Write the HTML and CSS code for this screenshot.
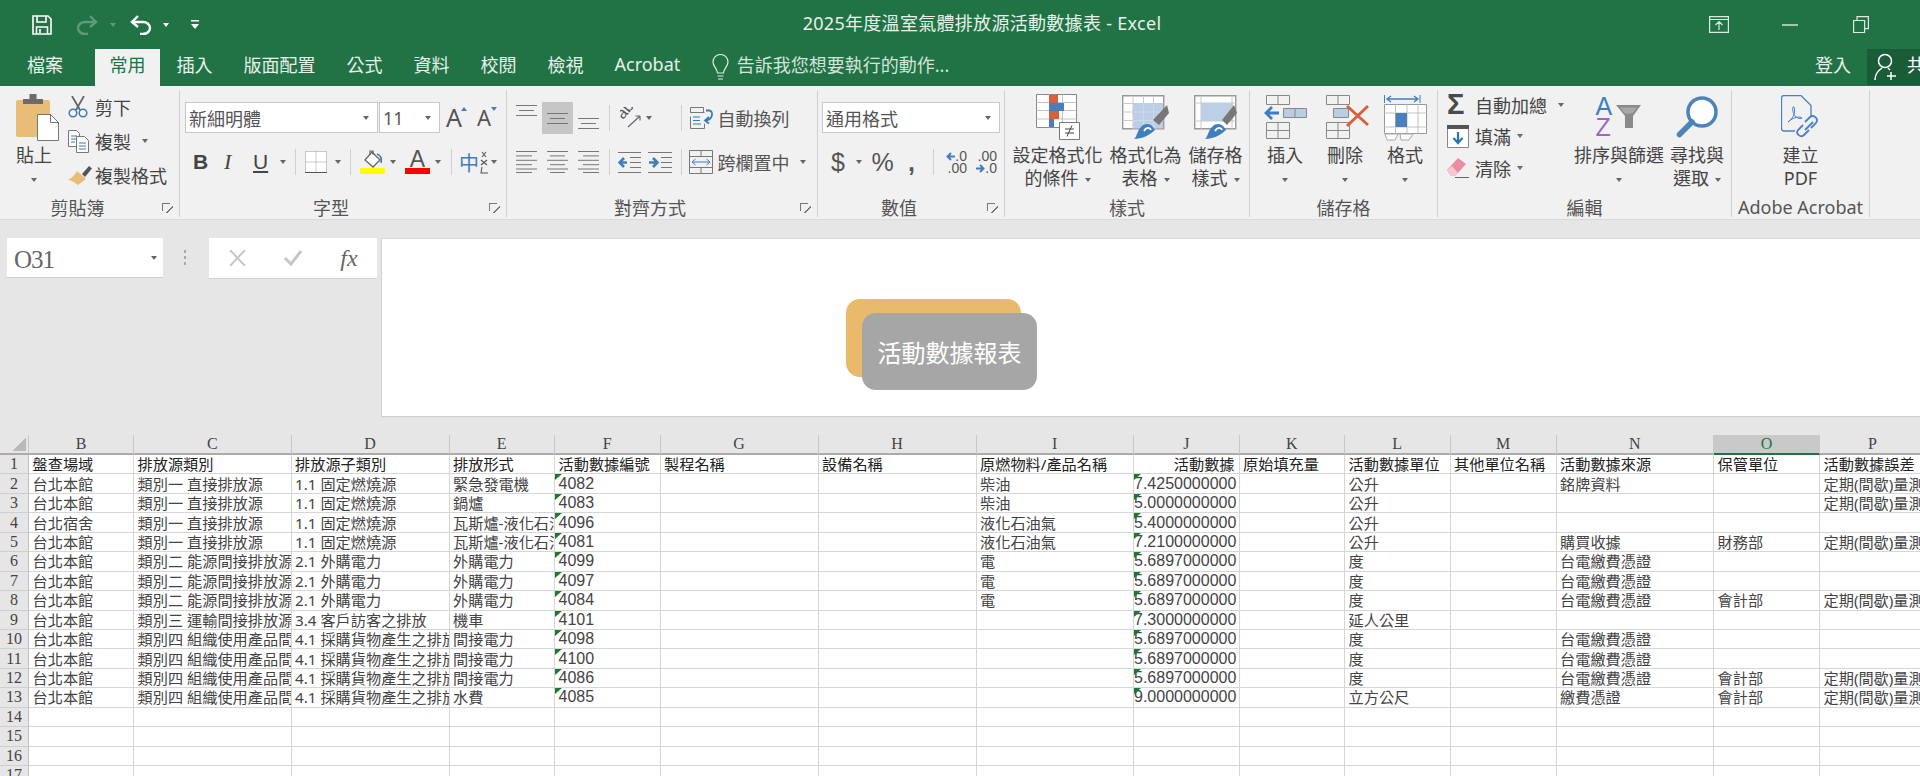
FILE: index.html
```html
<!DOCTYPE html>
<html lang="zh-Hant">
<head>
    <meta charset="UTF-8">
    <meta name="viewport" content="width=device-width, initial-scale=1.0">
    <title>2025年度溫室氣體排放源活動數據表 - Excel</title>
    <link rel="stylesheet" href="styles.css">
</head>
<body>

<div class="titlebar">
    <div class="qat">
        <svg width="20" height="20" viewBox="0 0 20 20" fill="none" stroke="#fff" stroke-width="1.6"><path d="M1 1h15l3 3v15H1z"/><path d="M5 1v6h9V1M4.500 19v-7h11v7M8 14v4"/></svg>
        <svg width="22" height="21" viewBox="0 0 22 21" fill="none" stroke="#5d9b79" stroke-width="2.400"><path d="M14 2l6 6-6 5"/><path d="M20 8H9a7 6 0 0 0 0 12h3"/></svg>
        <span class="caret caret-dim"></span>
        <svg width="22" height="21" viewBox="0 0 22 21" fill="none" stroke="#fff" stroke-width="2.400"><path d="M8 2L2 8l6 5"/><path d="M2 8h11a7 6 0 0 1 0 12h-3"/></svg>
        <span class="caret caret-white"></span>
        <svg width="8" height="10" viewBox="0 0 8 10" fill="#fff"><path d="M0 0h8v1.500H0zM0 4h8L4 9z"/></svg>
    </div>
    <div class="doc-title">2025年度溫室氣體排放源活動數據表 - Excel</div>
    <div class="winbtns">
        <svg width="20" height="17" viewBox="0 0 20 17" fill="none" stroke="#dfe9e3" stroke-width="1.200"><path d="M.6.600h18.800v15.800H.6zM.6 3.500h18.800M10 14V6M6.500 9L10 5.500 13.500 9"/></svg>
        <svg width="16" height="17" viewBox="0 0 16 17" fill="none" stroke="#dfe9e3" stroke-width="1.400"><path d="M0 9h16"/></svg>
        <svg width="16" height="17" viewBox="0 0 16 17" fill="none" stroke="#dfe9e3" stroke-width="1.200"><path d="M.6 4.500h11v12H.6zM4 4.500V.6h11.400v12h-3.800"/></svg>
    </div>
</div>

<div class="tabs">
    <div class="tab tab-file">檔案</div>
    <div class="tab tab-active">常用</div>
    <div class="tab">插入</div>
    <div class="tab">版面配置</div>
    <div class="tab">公式</div>
    <div class="tab">資料</div>
    <div class="tab">校閱</div>
    <div class="tab">檢視</div>
    <div class="tab">Acrobat</div>
    <div class="tellme">
        <svg width="17" height="27" viewBox="0 0 17 27" fill="none" stroke="#dfe9e3" stroke-width="1.200"><path d="M5.500 19C5 14 1 12.500 1 8a7.500 7.500 0 0 1 15 0c0 4.500-4 6-4.500 11zM5.500 22h6M6 25h5"/></svg>
        <span>告訴我您想要執行的動作...</span>
    </div>
    <div class="signin">登入</div>
    <div class="share">
        <svg width="23" height="28" viewBox="0 0 23 28" fill="none" stroke="#fff" stroke-width="1.500"><circle cx="11" cy="8" r="6.500"/><path d="M1 27c0-7 4-10 7-12M14 15l2 2M17 19v8M13 23h9"/></svg>
        <span>共用</span>
    </div>
</div>

<div class="ribbon">
    <section class="group g-clip">
        <div class="group-body">
            <div class="paste">
                <div class="ico">
                    <svg width="43" height="47" viewBox="0 0 43 47"><rect y="6" width="34" height="37" rx="2" fill="#e8bd75"/><path d="M7 5h6.500V0h7v5H27v5H7z" fill="#6b6b6b"/><path d="M21.500 20.500h13l8 8v18h-21z" fill="#fff" stroke="#777"/><path d="M34.500 20.500v8h8" fill="none" stroke="#777"/></svg>
                </div>
                <div class="big-text">貼上</div>
                <div class="big-text paste-caret"><span class="caret"></span></div>
            </div>
            <div class="mini-col">
                <div class="mini">
                    <span class="mico"><svg width="20" height="22" viewBox="0 0 20 22" fill="none"><path d="M4 0l8 14M16 0L8 14" stroke="#666" stroke-width="1.800"/><circle cx="5" cy="17" r="3.800" stroke="#3d7ab5" stroke-width="1.500"/><circle cx="15" cy="17" r="3.800" stroke="#3d7ab5" stroke-width="1.500"/></svg></span>
                    <span>剪下</span>
                </div>
                <div class="mini">
                    <span class="mico"><svg width="21" height="23" viewBox="0 0 21 23" fill="#fff" stroke="#777"><path d="M.5.500h8l3 3v13h-11z"/><path d="M3 6h6M3 9h6M3 12h4" stroke="#3d7ab5"/><path d="M8.500 6.500h8l4 4v12h-12z"/><path d="M11 13h7M11 16h7M11 19h7" stroke="#3d7ab5"/></svg></span>
                    <span>複製</span><span class="caret caret-far"></span>
                </div>
                <div class="mini">
                    <span class="mico"><svg width="24" height="20" viewBox="0 0 24 20"><path d="M14 9l7-8 3 2.500-7 8.500z" fill="#555"/><path d="M9 6l9 8-8 6C6 17 3 15 0 15c4-2 7-5 9-9z" fill="#e8bd75"/></svg></span>
                    <span>複製格式</span>
                </div>
            </div>
        </div>
        <div class="group-label"><span>剪貼簿</span><i class="launcher"></i></div>
    </section>

    <section class="group g-font">
        <div class="group-body rows">
            <div class="row row-font1">
                <div class="combo combo-font"><span>新細明體</span><span class="caret"></span></div>
                <div class="combo combo-size"><span>11</span><span class="caret"></span></div>
                <div class="grow-a grow-up">A<i></i></div>
                <div class="grow-a grow-down">A<i></i></div>
            </div>
            <div class="row row-font2">
                <b class="fmt">B</b>
                <i class="fmt fmt-i">I</i>
                <u class="fmt">U</u>
                <span class="caret"></span>
                <span class="sep"></span>
                <svg width="22" height="22" viewBox="0 0 22 22" fill="#fff" stroke="#999" stroke-dasharray="1 1"><path d="M.5.500h21v21H.5zM11 .5v21M.5 11h21"/><path d="M0 21.500h22" stroke="#555" stroke-dasharray="none"/></svg>
                <span class="caret"></span>
                <span class="sep"></span>
                <div class="colorbtn">
                    <svg width="25" height="18" viewBox="0 0 25 18" fill="none"><path d="M5 10l7-8 8 8-7 7z" fill="#fff" stroke="#666" stroke-width="1.300"/><path d="M10 5V1h3v4" stroke="#666" stroke-width="1.200"/><path d="M17 4c3 1 5 4 4 9" stroke="#3d7ab5" stroke-width="1.600"/></svg>
                    <i class="bar bar-yellow"></i>
                </div>
                <span class="caret"></span>
                <div class="colorbtn"><span class="color-a">A</span><i class="bar bar-red"></i></div>
                <span class="caret"></span>
                <span class="sep"></span>
                <div class="phonetic"><span>中</span><svg width="11" height="23" viewBox="0 0 11 23" fill="none" stroke="#555" stroke-width="1.100"><path d="M3 1l4 5M7 1L3 6M2 9l6 5M8 9l-6 5M3 16l-1 6h7"/></svg></div>
                <span class="caret"></span>
            </div>
        </div>
        <div class="group-label"><span>字型</span><i class="launcher"></i></div>
    </section>

    <section class="group g-align">
        <div class="group-body rows">
            <div class="row row-align1">
                <svg class="va-top" width="21" height="11" viewBox="0 0 21 11" stroke="#777"><path d="M0 .5h21M3 5.500h15M0 10.500h21"/></svg>
                <div class="align-on"><svg width="21" height="11" viewBox="0 0 21 11" stroke="#777"><path d="M0 .5h21M3 5.500h15M0 10.500h21"/></svg></div>
                <svg class="va-low" width="21" height="11" viewBox="0 0 21 11" stroke="#777"><path d="M0 .5h21M3 5.500h15M0 10.500h21"/></svg>
                <span class="sep"></span>
                <svg width="22" height="22" viewBox="0 0 22 22"><text class="orient" transform="translate(3 13) rotate(-50)">ab</text><path d="M8 20L20 9M20 9h-4.500M20 9v4.500" stroke="#666" stroke-width="1.200" fill="none"/></svg>
                <span class="caret"></span>
                <span class="sep"></span>
                <svg width="24" height="22" viewBox="0 0 24 22" fill="none" stroke="#777"><path d="M.5.500h13v5H.5zM.5 5.500h14M.5 9.500v12h14V17"/><path d="M3 10h7M3 13.500h7M3 17h8" stroke="#3d7ab5"/><path d="M16 3.500h3c5 0 4 10-4 10M19 10l-4 3.500 4 3" stroke="#3d7ab5" stroke-width="1.800"/></svg>
                <span class="tool-text">自動換列</span>
            </div>
            <div class="row row-align2">
                <svg width="21" height="22" viewBox="0 0 21 22" stroke="#777"><path d="M0 .5h21M0 4.900h16M0 9.300h21M0 13.700h16M0 18h21M0 21.500h16"/></svg>
                <svg width="21" height="22" viewBox="0 0 21 22" stroke="#777"><path d="M0 .5h21M3 4.900h15M0 9.300h21M3 13.700h15M0 18h21M3 21.500h15"/></svg>
                <svg width="21" height="22" viewBox="0 0 21 22" stroke="#777"><path d="M0 .5h21M5 4.900h16M0 9.300h21M5 13.700h16M0 18h21M5 21.500h16"/></svg>
                <span class="sep"></span>
                <svg width="23" height="22" viewBox="0 0 23 22" fill="none" stroke="#777"><path d="M0 1.500h23M12 6.500h11M12 11.500h11M12 16.500h11M0 21.500h23"/><path d="M9 11.500H2M6 7l-4.500 4.500L6 16" stroke="#3f7fc0" stroke-width="2.600"/></svg>
                <svg width="24" height="22" viewBox="0 0 24 22" fill="none" stroke="#777"><path d="M0 1.500h24M13 6.500h11M13 11.500h11M13 16.500h11M0 21.500h24"/><path d="M1 11.500h7M5 7l4.500 4.500L5 16" stroke="#3f7fc0" stroke-width="2.600"/></svg>
                <span class="sep"></span>
                <svg width="24" height="24" viewBox="0 0 24 24" fill="none" stroke="#777"><path d="M.5.500h23v23H.5zM.5 6.500h23M.5 17.500h23M12 .5v6M12 17.500v6"/><path d="M3 12h18M6.500 9L3 12l3.500 3M17.500 9l3.500 3-3.500 3" stroke="#3f7fc0"/></svg>
                <span class="tool-text">跨欄置中</span>
                <span class="caret"></span>
            </div>
        </div>
        <div class="group-label"><span>對齊方式</span><i class="launcher"></i></div>
    </section>

    <section class="group g-number">
        <div class="group-body rows">
            <div class="row row-num1">
                <div class="combo combo-num"><span>通用格式</span><span class="caret"></span></div>
            </div>
            <div class="row row-num2">
                <span class="sym">$</span>
                <span class="caret"></span>
                <span class="sym">%</span>
                <span class="sym sym-comma">,</span>
                <span class="sep"></span>
                <div class="dec"><div class="dec-line"><svg width="9" height="9" viewBox="0 0 9 9" fill="none" stroke="#3f7fc0" stroke-width="2"><path d="M9 4.500H1.500M5 1L1.500 4.500 5 8"/></svg>.0</div><div class="dec-line">.00</div></div>
                <div class="dec"><div class="dec-line">.00</div><div class="dec-line"><svg width="9" height="9" viewBox="0 0 9 9" fill="none" stroke="#3f7fc0" stroke-width="2"><path d="M0 4.500h7.500M4 1l3.500 3.500L4 8"/></svg>.0</div></div>
            </div>
        </div>
        <div class="group-label"><span>數值</span><i class="launcher"></i></div>
    </section>

    <section class="group g-style">
        <div class="group-body bigs">
            <div class="big big-cond">
                <div class="ico">
                    <svg width="46" height="46" viewBox="0 0 46 46" fill="none"><path d="M1.500.5h40v33h-40z" fill="#fff" stroke="#888"/><path d="M1.500 8.500h40M1.500 16.500h40M1.500 25h40M14.500.5v33M27.500.5v33" stroke="#c2c2c2"/><path d="M14 1h9v8h-9zM14 17h10v8H14z" fill="#d7603a"/><path d="M14 9h15v8H14zM14 25h5v8h-5z" fill="#4a7fbd"/><path d="M24.500 28.500h20v17h-20z" fill="#fff" stroke="#777"/><path d="M30 35h9M30 39h9M32 42.500l5-11" stroke="#444"/></svg>
                </div>
                <div class="big-text">設定格式化</div>
                <div class="big-text">的條件<span class="caret"></span></div>
            </div>
            <div class="big big-table">
                <div class="ico">
                    <svg width="47" height="44" viewBox="0 0 47 44" fill="none"><path d="M.7.700h41v33H.7z" fill="#fff" stroke="#999" stroke-width="1.400"/><path d="M.7 8.500h41M.7 17h41M.7 25.500h41M11 .7v33M21.500.7v33M31.500.7v33" stroke="#c8c8c8"/><path d="M11 8.500h30v25H11z" fill="#bccfe4"/><path d="M11 17h30M11 25.500h30M21.500 8.500v25M31.500 8.500v25" stroke="#cddaea"/><path d="M31 25l14-15 2 8-10 12z" fill="#777"/><path d="M12 44c3-2 3-9 8-13 4-3 9-3 13 4 -5 5-13 9-21 9z" fill="#3f7fc0"/><path d="M22 36c2-4 6-4 7-1" stroke="#fff" stroke-width="1.800"/></svg>
                </div>
                <div class="big-text">格式化為</div>
                <div class="big-text">表格<span class="caret"></span></div>
            </div>
            <div class="big big-cell">
                <div class="ico">
                    <svg width="44" height="44" viewBox="0 0 44 44" fill="none"><path d="M.7.700h41v33H.7z" fill="#fff" stroke="#999" stroke-width="1.400"/><path d="M.7 8h41M.7 26h41M7 .7v33M38 .7v33" stroke="#c8c8c8"/><path d="M7 8h32v18H7z" fill="#bccfe4"/><path d="M28 25l12-15 3 8-10 12z" fill="#777"/><path d="M11 44c3-2 3-9 8-13 4-3 9-3 13 4 -5 5-13 9-21 9z" fill="#3f7fc0"/><path d="M21 36c2-4 6-4 7-1" stroke="#fff" stroke-width="1.800"/></svg>
                </div>
                <div class="big-text">儲存格</div>
                <div class="big-text">樣式<span class="caret"></span></div>
            </div>
        </div>
        <div class="group-label"><span>樣式</span></div>
    </section>

    <section class="group g-cells">
        <div class="group-body bigs">
            <div class="big big-cellbtn">
                <div class="ico">
                    <svg width="44" height="44" viewBox="0 0 44 44" fill="none" stroke="#888"><path d="M3.500.5h23v9h-23zM15 .5v9M3.500 27.500h23v16h-23zM3.500 35.500h23M15 27.500v16"/><path d="M20.500 13.500h23v9h-23z" fill="#b9cde3"/><path d="M32 13.500v9"/><path d="M16 18H3M9 12l-6 6 6 6" stroke="#3f7fc0" stroke-width="2.800"/></svg>
                </div>
                <div class="big-text">插入</div>
                <div class="big-text"><span class="caret caret-solo"></span></div>
            </div>
            <div class="big big-cellbtn">
                <div class="ico">
                    <svg width="48" height="44" viewBox="0 0 48 44" fill="none" stroke="#888"><path d="M5.500.5h23v9h-23zM17 .5v9M5.500 27.500h23v16h-23zM5.500 35.500h23M17 27.500v16"/><path d="M12.500 13.500h15v9h-15z" fill="#b9cde3"/><path d="M26 11l21 19M47 11L26 31" stroke="#d7603a" stroke-width="3"/></svg>
                </div>
                <div class="big-text">刪除</div>
                <div class="big-text"><span class="caret caret-solo"></span></div>
            </div>
            <div class="big big-cellbtn">
                <div class="ico">
                    <svg width="43" height="47" viewBox="0 0 43 47" fill="none"><path d="M.5 1v8M36 1v8" stroke="#3f7fc0"/><path d="M3 5h31M7 2L3 5l4 3M30 2l4 3-4 3" stroke="#3f7fc0" stroke-width="1.300"/><path d="M.5 10.500h42v29H.5z" fill="#fff" stroke="#999"/><path d="M.5 19h42M.5 33h42M11.500 10.500v29M23 10.500v29M34 10.500v29" stroke="#c2c2c2"/><path d="M11.500 19H23v14H11.500z" fill="#4a7fbd"/><path d="M1 40h13l-3 6H3zM16 40h13l-4 6h-8z" fill="#fff" stroke="#aaa"/></svg>
                </div>
                <div class="big-text">格式</div>
                <div class="big-text"><span class="caret caret-solo"></span></div>
            </div>
        </div>
        <div class="group-label"><span>儲存格</span></div>
    </section>

    <section class="group g-edit">
        <div class="group-body bigs">
            <div class="mini-col mini-col-edit">
                <div class="mini">
                    <span class="mico sigma">Σ</span>
                    <span>自動加總</span><span class="caret caret-far"></span>
                </div>
                <div class="mini">
                    <span class="mico"><svg width="22" height="23" viewBox="0 0 22 23" fill="#fff" stroke="#888"><path d="M.5.500h21v22H.5z"/><path d="M0 0h22v4H0z" fill="#555" stroke="none"/><path d="M11 7v11M6.500 13l4.500 5 4.500-5" fill="none" stroke="#2f72b8" stroke-width="2.200"/></svg></span>
                    <span>填滿</span><span class="caret"></span>
                </div>
                <div class="mini">
                    <span class="mico"><svg width="22" height="20" viewBox="0 0 22 20"><path d="M0 12L11 0l8 6-11 12H4z" fill="#ea8da0"/><path d="M0 12l4 6h4l3-3-6-7z" fill="#f6c7d0"/><path d="M8 19.500h14" stroke="#666"/></svg></span>
                    <span>清除</span><span class="caret"></span>
                </div>
            </div>
            <div class="big big-sort">
                <div class="ico">
                    <div class="sort-ico">
                        <div class="az"><span class="az-a">A</span><span class="az-z">Z</span></div>
                        <svg width="25" height="23" viewBox="0 0 25 23"><path d="M0 0h25l-8 11v12H9V11z" fill="#8a8a8a"/><path d="M4 2.500h17l-5 6H9z" fill="#a8a8a8"/></svg>
                    </div>
                </div>
                <div class="big-text">排序與篩選</div>
                <div class="big-text"><span class="caret caret-solo"></span></div>
            </div>
            <div class="big big-find">
                <div class="ico">
                    <svg width="42" height="42" viewBox="0 0 42 42" fill="none"><circle cx="26" cy="16" r="14" fill="#fff" stroke="#4a84b8" stroke-width="3.500"/><path d="M16 26L3.500 38.500" stroke="#4a84b8" stroke-width="5.500" stroke-linecap="round"/></svg>
                </div>
                <div class="big-text">尋找與</div>
                <div class="big-text">選取<span class="caret"></span></div>
            </div>
        </div>
        <div class="group-label"><span>編輯</span></div>
    </section>

    <section class="group g-pdf">
        <div class="group-body bigs">
            <div class="big big-pdf">
                <div class="ico">
                    <svg width="40" height="44" viewBox="0 0 40 44" fill="none" stroke="#4a7fcc" stroke-width="1.300"><path d="M14 36H3a2.500 2.500 0 0 1-2.500-2.500V3A2.500 2.500 0 0 1 3 .5h17l10 10V22"/><path d="M7 27c5-3 8-10 6-15-2-2-2 7 2 10 3 2 6 2 6 1-1-2-9-1-14 4z" stroke-width="1"/><path d="M24 27l5-5c4-3 9 2 6 6l-5 5M28 35l-5 5c-3 3-9-1-6-5l5-5M24 35l8-8" stroke-width="1.800"/></svg>
                </div>
                <div class="big-text">建立</div>
                <div class="big-text">PDF</div>
            </div>
        </div>
        <div class="group-label"><span>Adobe Acrobat</span></div>
    </section>
</div>

<div class="formula">
    <div class="namebox"><span class="name-text">O31</span><span class="caret"></span></div>
    <div class="dots"></div>
    <div class="fxbox">
        <svg width="19" height="16" viewBox="0 0 19 16" fill="none" stroke="#c6c6c6" stroke-width="2"><path d="M2 0l15 16M17 0L2 16"/></svg>
        <svg width="20" height="16" viewBox="0 0 20 16" fill="none" stroke="#c6c6c6" stroke-width="3"><path d="M2 8l6 6L18 1"/></svg>
        <span class="fx-f">fx</span>
    </div>
    <div class="fxinput">
        <div class="shape shape-back"></div>
        <div class="shape shape-front">活動數據報表</div>
    </div>
</div>

<table class="sheet">
    <colgroup>
        <col class="w-rn"><col class="w-b"><col class="w-m"><col class="w-l"><col class="w-s"><col class="w-s"><col class="w-l"><col class="w-l"><col class="w-m"><col class="w-s"><col class="w-s"><col class="w-s"><col class="w-x"><col class="w-m"><col class="w-x"><col class="w-x">
    </colgroup>
    <tr class="cols"><th class="corner"><i></i></th><th>B</th><th>C</th><th>D</th><th>E</th><th>F</th><th>G</th><th>H</th><th>I</th><th>J</th><th>K</th><th>L</th><th>M</th><th>N</th><th class="col-on">O</th><th>P</th></tr>
    <tr class="head"><th>1</th><td>盤查場域</td><td>排放源類別</td><td>排放源子類別</td><td>排放形式</td><td>活動數據編號</td><td>製程名稱</td><td>設備名稱</td><td>原燃物料/產品名稱</td><td class="num-head">活動數據</td><td>原始填充量</td><td>活動數據單位</td><td>其他單位名稱</td><td>活動數據來源</td><td>保管單位</td><td>活動數據誤差</td></tr>
    <tr><th>2</th><td>台北本館</td><td>類別一 直接排放源</td><td>1.1 固定燃燒源</td><td>緊急發電機</td><td class="flag num-l">4082</td><td></td><td></td><td>柴油</td><td class="flag num">7.4250000000</td><td></td><td>公升</td><td></td><td>銘牌資料</td><td></td><td>定期(間歇)量測</td></tr>
    <tr><th>3</th><td>台北本館</td><td>類別一 直接排放源</td><td>1.1 固定燃燒源</td><td>鍋爐</td><td class="flag num-l">4083</td><td></td><td></td><td>柴油</td><td class="flag num">5.0000000000</td><td></td><td>公升</td><td></td><td></td><td></td><td>定期(間歇)量測</td></tr>
    <tr><th>4</th><td>台北宿舍</td><td>類別一 直接排放源</td><td>1.1 固定燃燒源</td><td>瓦斯爐-液化石油氣</td><td class="flag num-l">4096</td><td></td><td></td><td>液化石油氣</td><td class="flag num">5.4000000000</td><td></td><td>公升</td><td></td><td></td><td></td><td></td></tr>
    <tr><th>5</th><td>台北本館</td><td>類別一 直接排放源</td><td>1.1 固定燃燒源</td><td>瓦斯爐-液化石油氣</td><td class="flag num-l">4081</td><td></td><td></td><td>液化石油氣</td><td class="flag num">7.2100000000</td><td></td><td>公升</td><td></td><td>購買收據</td><td>財務部</td><td>定期(間歇)量測</td></tr>
    <tr><th>6</th><td>台北本館</td><td>類別二 能源間接排放源</td><td>2.1 外購電力</td><td>外購電力</td><td class="flag num-l">4099</td><td></td><td></td><td>電</td><td class="flag num">5.6897000000</td><td></td><td>度</td><td></td><td>台電繳費憑證</td><td></td><td></td></tr>
    <tr><th>7</th><td>台北本館</td><td>類別二 能源間接排放源</td><td>2.1 外購電力</td><td>外購電力</td><td class="flag num-l">4097</td><td></td><td></td><td>電</td><td class="flag num">5.6897000000</td><td></td><td>度</td><td></td><td>台電繳費憑證</td><td></td><td></td></tr>
    <tr><th>8</th><td>台北本館</td><td>類別二 能源間接排放源</td><td>2.1 外購電力</td><td>外購電力</td><td class="flag num-l">4084</td><td></td><td></td><td>電</td><td class="flag num">5.6897000000</td><td></td><td>度</td><td></td><td>台電繳費憑證</td><td>會計部</td><td>定期(間歇)量測</td></tr>
    <tr><th>9</th><td>台北本館</td><td>類別三 運輸間接排放源</td><td>3.4 客戶訪客之排放</td><td>機車</td><td class="flag num-l">4101</td><td></td><td></td><td></td><td class="flag num">7.3000000000</td><td></td><td>延人公里</td><td></td><td></td><td></td><td></td></tr>
    <tr><th>10</th><td>台北本館</td><td>類別四 組織使用產品間接排放</td><td>4.1 採購貨物產生之排放</td><td>間接電力</td><td class="flag num-l">4098</td><td></td><td></td><td></td><td class="flag num">5.6897000000</td><td></td><td>度</td><td></td><td>台電繳費憑證</td><td></td><td></td></tr>
    <tr><th>11</th><td>台北本館</td><td>類別四 組織使用產品間接排放</td><td>4.1 採購貨物產生之排放</td><td>間接電力</td><td class="flag num-l">4100</td><td></td><td></td><td></td><td class="flag num">5.6897000000</td><td></td><td>度</td><td></td><td>台電繳費憑證</td><td></td><td></td></tr>
    <tr><th>12</th><td>台北本館</td><td>類別四 組織使用產品間接排放</td><td>4.1 採購貨物產生之排放</td><td>間接電力</td><td class="flag num-l">4086</td><td></td><td></td><td></td><td class="flag num">5.6897000000</td><td></td><td>度</td><td></td><td>台電繳費憑證</td><td>會計部</td><td>定期(間歇)量測</td></tr>
    <tr><th>13</th><td>台北本館</td><td>類別四 組織使用產品間接排放</td><td>4.1 採購貨物產生之排放</td><td>水費</td><td class="flag num-l">4085</td><td></td><td></td><td></td><td class="flag num">9.0000000000</td><td></td><td>立方公尺</td><td></td><td>繳費憑證</td><td>會計部</td><td>定期(間歇)量測</td></tr>
    <tr><th>14</th><td></td><td></td><td></td><td></td><td></td><td></td><td></td><td></td><td></td><td></td><td></td><td></td><td></td><td></td><td></td></tr>
    <tr><th>15</th><td></td><td></td><td></td><td></td><td></td><td></td><td></td><td></td><td></td><td></td><td></td><td></td><td></td><td></td><td></td></tr>
    <tr><th>16</th><td></td><td></td><td></td><td></td><td></td><td></td><td></td><td></td><td></td><td></td><td></td><td></td><td></td><td></td><td></td></tr>
    <tr><th>17</th><td></td><td></td><td></td><td></td><td></td><td></td><td></td><td></td><td></td><td></td><td></td><td></td><td></td><td></td><td></td></tr>
</table>

</body>
</html>
```

FILE: styles.css
```css
html, body {
    margin: 0;
    height: 776px;
    overflow: hidden;
}
body {
    background: #e6e6e6;
    font-family: "Noto Sans", "Noto Sans CJK TC", sans-serif;
    font-size: 18px;
    color: #444;
}

/* title bar */
.titlebar {
    display: flex;
    align-items: center;
    height: 49px;
    background: #217346;
    color: #e8f0ea;
}
.qat {
    display: grid;
    grid-template-columns: 44px 34px 20px 33px 28px auto;
    align-items: center;
    width: 274px;
    padding-left: 32px;
    box-sizing: border-box;
}
.doc-title {
    flex: 1;
    padding-bottom: 5px;
    text-align: center;
    letter-spacing: .3px;
    white-space: nowrap;
}
.winbtns {
    display: grid;
    grid-template-columns: 73px 71px auto;
    align-items: center;
    width: 230px;
    padding-left: 19px;
    box-sizing: border-box;
}

.caret {
    display: inline-block;
    width: 0;
    height: 0;
    margin-left: 6px;
    border-left: 3.5px solid transparent;
    border-right: 3.5px solid transparent;
    border-top: 4px solid #666;
    vertical-align: middle;
}
.qat .caret, .row .caret { margin-left: 0; }
.caret-dim { border-top-color: #5d9b79; }
.caret-white { border-top-color: #fff; }
.caret-far { margin-left: 11px; }
.caret-solo { margin-left: 0; }

/* tabs */
.tabs {
    display: flex;
    height: 37px;
    background: #217346;
    color: #e8f0ea;
    white-space: nowrap;
}
.tab {
    display: flex;
    align-items: center;
    padding: 0 15.5px 7px;
}
.tab-file { margin: 0 17px 0 11.5px; padding-right: 15px; }
.tab-active {
    padding: 0 14.5px 7px;
    margin-right: 1px;
    background: #f1f1f1;
    color: #217346;
}
.tellme {
    display: flex;
    align-items: center;
    gap: 8px;
    margin-left: 16px;
    color: #d5e3da;
}
.tellme span { padding-bottom: 7px; }
.signin {
    display: flex;
    align-items: center;
    margin-left: auto;
    margin-right: 16px;
    padding-bottom: 7px;
}
.share {
    display: flex;
    align-items: center;
    gap: 10px;
    width: 53px;
    height: 36px;
    padding-left: 7px;
    box-sizing: border-box;
    overflow: hidden;
    background: #1a5c38;
    color: #fff;
}
.share svg { flex: none; }
.share span { padding-bottom: 6px; }

/* ribbon */
.ribbon {
    display: flex;
    height: 134px;
    padding-top: 4px;
    box-sizing: border-box;
    background: #f1f1f1;
    border-bottom: 1px solid #dadada;
}
.group {
    display: flex;
    flex-direction: column;
    flex: none;
    height: 127px;
    box-sizing: border-box;
    border-right: 1px solid #d0d0d0;
}
.g-clip { width: 180px; }
.g-font { width: 327px; }
.g-align { width: 311px; }
.g-number { width: 187px; }
.g-style { width: 245px; }
.g-cells { width: 188px; }
.g-edit { width: 294px; }
.g-pdf { width: 138px; }
.group-body {
    display: flex;
    height: 109px;
    white-space: nowrap;
}
.group-label {
    display: flex;
    align-items: center;
    height: 18px;
    margin-top: -1px;
    color: #555;
}
.group-label span {
    flex: 1;
    text-align: center;
    white-space: nowrap;
}
.launcher {
    width: 24px;
    height: 10px;
    margin-top: 2px;
    background:
        linear-gradient(#777, #777) 7px 0 / 8px 1px no-repeat,
        linear-gradient(#777, #777) 7px 0 / 1px 8px no-repeat,
        linear-gradient(135deg, transparent 46%, #777 46%, #777 58%, transparent 58%) 11px 3px / 7px 7px no-repeat;
}

/* large buttons */
.bigs { align-items: flex-start; }
.big {
    display: flex;
    flex-direction: column;
    align-items: center;
    flex: none;
}
.ico {
    display: flex;
    align-items: center;
    justify-content: center;
    height: 54px;
}
.big-text {
    height: 23px;
    line-height: 23px;
    text-align: center;
}
.g-style .bigs { padding-left: 4px; gap: 1px; }
.big-cond { width: 97px; }
.big-table { width: 77px; }
.big-cell { width: 59px; margin-left: 1px; }
.g-cells .bigs { padding-left: 12px; gap: 14px; }
.big-cellbtn { width: 46px; }
.big-sort { width: 92px; }
.big-find { width: 58px; margin-left: 3px; }
.big-pdf { width: 137px; }

.paste {
    flex: none;
    width: 52px;
    margin-left: 16px;
}
.paste .ico { justify-content: flex-start; }
.paste .big-text { width: 36px; }
.paste-caret .caret { margin-left: 0; }

/* small stacked buttons */
.mini {
    display: flex;
    align-items: center;
    height: 34px;
}
.mico {
    display: flex;
    flex: none;
    width: 27px;
}
.mini-col-edit {
    flex: none;
    width: 135px;
    margin-top: -1px;
    padding-left: 9px;
    box-sizing: border-box;
}
.mini-col-edit .mini { height: 31.5px; }
.mini-col-edit .mico { width: 28px; }
.sigma {
    font-family: "Liberation Sans", sans-serif;
    font-size: 29px;
    line-height: 31px;
    font-weight: bold;
    color: #4a4a4a;
}

/* toolbar rows */
.rows {
    flex-direction: column;
    gap: 14px;
    padding-top: 12px;
    box-sizing: border-box;
}
.row {
    display: grid;
    align-items: center;
    justify-items: start;
}
.row-font1, .row-align1, .row-num1 { height: 31px; }
.row-font2, .row-align2, .row-num2 { height: 30px; }
.row-font1 { grid-template-columns: 194px 61px 6px 31px 24px; padding-left: 5px; }
.row-font1 .grow-up { grid-column: 4; }
.row-font2 { grid-template-columns: 31px 29px 27px 15px 10px 30px 15px 10px 30px 15px 30px 16px 8px 32px auto; padding-left: 13px; }
.row-align1 { grid-template-columns: 26px 36px 30.5px 11.5px 26px 35px 9px 27.5px auto; padding-left: 9px; }
.row-align2 { grid-template-columns: 31px 31px 30.5px 9px 30.5px 33px 8px 28.5px 82.5px auto; padding-left: 9px; }
.row-num1 { padding-left: 4px; }
.row-num2 { grid-template-columns: 25px 15.5px 36.5px 25px 10px 30px auto; padding-left: 13px; }

.sep {
    width: 1px;
    height: 26px;
    background: #d0d0d0;
}
.combo {
    display: flex;
    align-items: center;
    justify-content: space-between;
    height: 31px;
    padding: 0 8px 0 3px;
    box-sizing: border-box;
    background: #fff;
    border: 1px solid #c8c8c8;
}
.combo span:first-child { color: #555; }
.combo-font { width: 193px; }
.combo-size { width: 61px; }
.combo-num { width: 178px; }
.grow-a {
    position: relative;
    line-height: 31px;
    color: #555;
}
.grow-up { font-size: 25px; }
.grow-down { font-size: 22px; }
.grow-a i {
    position: absolute;
    right: -5px;
    top: 5px;
    border-left: 3.5px solid transparent;
    border-right: 3.5px solid transparent;
}
.grow-up i { border-bottom: 4px solid #3f7fc0; }
.grow-down i { right: -6px; border-top: 4px solid #3f7fc0; }
.fmt {
    font-family: "Liberation Sans", sans-serif;
    font-size: 21px;
    color: #444;
}
.fmt-i { font-family: "Liberation Serif", serif; font-size: 22px; }
.colorbtn {
    display: flex;
    flex-direction: column;
    align-items: center;
    width: 25px;
    height: 24px;
}
.colorbtn svg { flex: none; }
.color-a {
    height: 18px;
    font-family: "Liberation Sans", sans-serif;
    font-size: 23px;
    line-height: 18px;
    color: #555;
}
.bar {
    display: block;
    width: 25px;
    height: 6px;
}
.bar-yellow { background: #ffff00; }
.bar-red { background: #ff0000; }
.phonetic {
    display: flex;
    align-items: center;
    font-size: 20px;
    color: #3f7fc0;
}
.align-on {
    display: flex;
    align-items: center;
    justify-content: center;
    width: 31px;
    height: 32px;
    background: #c6c6c6;
}
.va-top { margin-bottom: 15px; }
.va-low { margin-top: 10px; }
.orient { font-size: 16px; fill: #555; font-family: "Liberation Sans", sans-serif; }
.tool-text { color: #555; }
.sym {
    font-family: "Liberation Sans", sans-serif;
    font-size: 25px;
    line-height: 30px;
    color: #555;
}
.sym-comma { font-weight: bold; line-height: 20px; }
.dec {
    width: 24px;
    font-family: "Liberation Sans", sans-serif;
    font-size: 14px;
    line-height: 12px;
    color: #555;
}
.dec-line {
    display: flex;
    align-items: center;
    justify-content: flex-end;
}
.sort-ico {
    display: flex;
    align-items: flex-start;
    gap: 2px;
    margin-right: 2px;
}
.sort-ico svg { margin-top: 9px; }
.az {
    display: flex;
    flex-direction: column;
    width: 18px;
    font-family: "Liberation Sans", sans-serif;
    font-size: 25px;
    line-height: 21px;
}
.az-a { color: #3f7fc0; }
.az-z { color: #9a68c0; }

/* formula bar */
.formula {
    display: flex;
    align-items: flex-start;
    height: 179px;
    margin-top: 18px;
    padding-left: 7px;
}
.namebox {
    display: flex;
    align-items: center;
    justify-content: space-between;
    width: 156px;
    height: 40px;
    padding: 0 6px 0 7px;
    box-sizing: border-box;
    background: #fff;
    border-bottom: 1px solid #d0d0d0;
    font-family: "Liberation Serif", serif;
    font-size: 25px;
    color: #666;
}
.name-text {
    padding-top: 4px;
    letter-spacing: -1px;
}
.dots {
    width: 2px;
    height: 15px;
    margin: 12px 23px 0 21px;
    background: repeating-linear-gradient(#aaa 0 3px, transparent 3px 6px);
}
.fxbox {
    display: grid;
    grid-template-columns: 56px 56px 56px;
    align-items: center;
    justify-items: center;
    width: 168px;
    height: 40px;
    background: #fff;
    border-bottom: 1px solid #d0d0d0;
}
.fx-f {
    font-family: "Liberation Serif", serif;
    font-style: italic;
    font-size: 24px;
    color: #666;
}
.fxinput {
    position: relative;
    flex: 1;
    height: 179px;
    margin-left: 4px;
    box-sizing: border-box;
    background: #fff;
    border-left: 1px solid #d0d0d0;
    border-top: 1px solid #dadada;
    border-bottom: 1px solid #cfcfcf;
}
.shape {
    position: absolute;
    width: 175px;
    border-radius: 14px;
}
.shape-back {
    left: 464px;
    top: 60px;
    height: 78px;
    background: #e9b96c;
}
.shape-front {
    display: flex;
    align-items: center;
    justify-content: center;
    left: 480px;
    top: 74px;
    height: 77px;
    background: #a6a6a6;
    color: #fff;
    font-size: 24px;
}

/* sheet */
.sheet {
    width: 1926px;
    margin-top: 18px;
    table-layout: fixed;
    border-collapse: separate;
    border-spacing: 0;
    background: #fff;
    font-size: 15.2px;
}
.w-rn { width: 29px; }
.w-b { width: 105px; }
.w-s { width: 105.5px; }
.w-x { width: 106px; }
.w-m { width: 157.500px; }
.w-l { width: 158px; }
.sheet tr { height: 19.45px; }
.sheet th, .sheet td {
    padding: 0;
    overflow: hidden;
    white-space: nowrap;
    box-sizing: border-box;
    font-weight: normal;
    line-height: 18px;
}
.sheet td {
    position: relative;
    padding-left: 3.5px;
    border-right: 1px solid #d6d6d6;
    border-bottom: 1px solid #d6d6d6;
}
.sheet th {
    background: #e6e6e6;
    border-right: 1px solid #c0c0c0;
    border-bottom: 1px solid #cfcfcf;
    font-family: "Liberation Serif", serif;
    font-size: 16px;
    color: #444;
}
.sheet .cols { height: 20px; }
.sheet .cols th {
    border-bottom: 2px solid #ababab;
    border-right-color: #c8c8c8;
}
.sheet .cols .col-on {
    background: #c9c9c9;
    border-bottom-color: #217346;
    color: #217346;
}
.corner i {
    display: block;
    width: 14px;
    height: 14px;
    margin-left: 12px;
    background: linear-gradient(135deg, transparent 50%, #b9b9b9 50%);
}
.head td { color: #222; }
.num-head { text-align: right; }
.sheet .num, .sheet .num-l {
    font-family: "Liberation Sans", sans-serif;
    font-size: 16px;
    color: #444;
}
.sheet .num {
    padding-left: 0;
    padding-right: 3px;
    text-align: right;
}
.sheet .num-head { padding-right: 4px; }
.flag::before {
    content: "";
    position: absolute;
    left: 0;
    top: 0;
    border-top: 6px solid #1b7a2e;
    border-right: 7px solid transparent;
}
```
